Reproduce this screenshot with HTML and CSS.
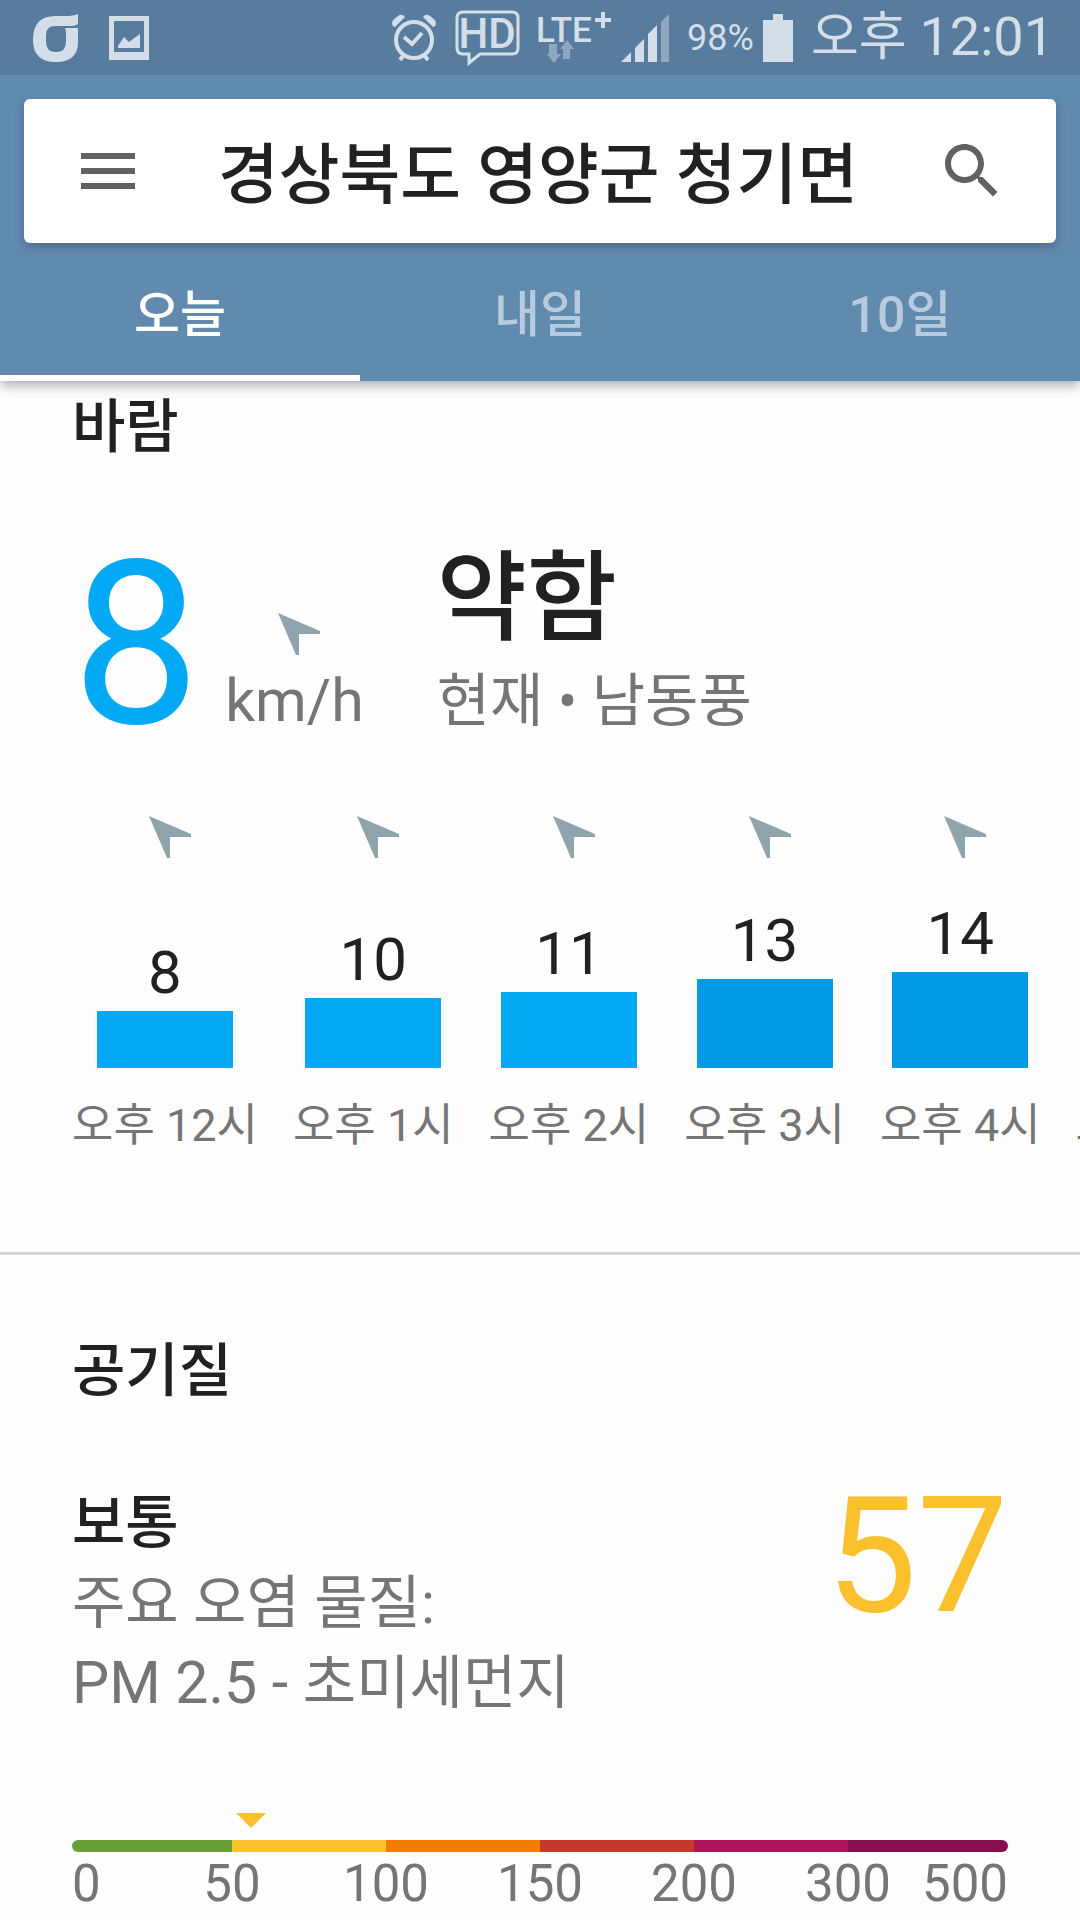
FILE: index.html
```html
<!DOCTYPE html>
<html lang="ko">
<head>
<meta charset="utf-8">
<meta name="viewport" content="width=device-width, initial-scale=1">
<title>날씨 - 경상북도 영양군 청기면</title>
<link rel="stylesheet" href="styles.css">
</head>
<body>
<svg class="symbols" aria-hidden="true">
  <symbol id="wind-arrow" viewBox="0 0 72 42"><path d="M20 0 L62 18 V21 H41 V42 H38 Z"/></symbol>
</svg>

<header class="header">
  <div class="status">
    <div class="status-side">
      <svg class="kt" viewBox="0 0 46 48" role="img" aria-label="통신사"><path d="M45 0V10Q42 12 36 12H22Q13 12 13 21V28Q13 38 23 38Q33 38 33 28V22Q33 16 32 14H45V28Q45 48 23 48Q0 48 0 26Q0 2 22 2H32Q40 2 45 0Z"/></svg>
      <svg class="photo" viewBox="0 0 40 44" role="img" aria-label="사진"><path fill-rule="evenodd" d="M0 0H40V44H0ZM5 5V36H35V5Z"/><path d="M9 32V30L15 21L20 26L31 18V32Z"/></svg>
    </div>
    <div class="status-side">
      <svg class="alarm" viewBox="0 0 44 48" role="img" aria-label="알람"><g fill="none" stroke="currentColor"><circle cx="22" cy="26" r="18" stroke-width="4"/><path d="M12 23L20 30L30 19" stroke-width="4"/><path d="M11 42L8 46M33 42L36 46" stroke-width="4"/></g><path d="M0 9Q0 6 6 2Q10 -1 13 3L3 13Q0 12 0 9ZM44 9Q44 6 38 2Q34 -1 31 3L41 13Q44 12 44 9Z"/></svg>
      <svg class="hd" viewBox="0 0 65 55" role="img" aria-label="HD"><path d="M8 2H57Q63 2 63 8V38Q63 44 57 44H25L14 53V44H8Q2 44 2 38V8Q2 2 8 2Z" fill="none" stroke="currentColor" stroke-width="3"/><text x="32" y="38" text-anchor="middle" class="hd-text">HD</text></svg>
      <svg class="lte" viewBox="0 0 77 52" role="img" aria-label="LTE+"><text x="0" y="30" class="lte-text">LTE</text><path d="M65 0H69V6H75V10H69V16H65V10H59V6H65Z"/><path class="dim" d="M13 32H21V42H25L18 51L11 42H13ZM27 47V37H24L31 28L38 37H34V47Z"/></svg>
      <svg class="signal" viewBox="0 0 48 48" role="img" aria-label="신호"><path d="M0 48L10 38V48ZM14 48V34L23 25V48ZM27 48V20L36 11V48Z"/><path class="dim" d="M40 48V8L48 0V48Z"/></svg>
      <span class="percent">98%</span>
      <svg class="battery" viewBox="0 0 30 48" role="img" aria-label="배터리"><path d="M10 0H20V6H30V48H0V6H10Z"/></svg>
      <time class="clock">오후 <span class="clock-digits">12:01</span></time>
    </div>
  </div>

  <form class="search">
    <button type="button" class="icon-button" aria-label="메뉴"><svg viewBox="0 0 24 24"><path d="M3 18h18v-2H3v2zm0-5h18v-2H3v2zm0-7v2h18V6H3z"/></svg></button>
    <input class="place" type="text" aria-label="위치" value="경상북도 영양군 청기면">
    <button type="submit" class="icon-button" aria-label="검색"><svg viewBox="0 0 24 24"><path d="M15.5 14h-.79l-.28-.27C15.41 12.59 16 11.11 16 9.5 16 5.91 13.09 3 9.5 3S3 5.91 3 9.5 5.91 16 9.5 16c1.61 0 3.09-.59 4.23-1.57l.27.28v.79l5 4.99L20.49 19l-4.99-5zm-6 0C7.01 14 5 11.99 5 9.5S7.01 5 9.5 5 14 7.01 14 9.5 11.99 14 9.5 14z"/></svg></button>
  </form>

  <nav class="tabs">
    <a class="tab active" href="#today">오늘</a>
    <a class="tab" href="#tomorrow">내일</a>
    <a class="tab" href="#ten-days">10일</a>
  </nav>
</header>

<main>
  <section class="wind">
    <h2 class="heading">바람</h2>
    <div class="now">
      <span class="speed">8</span>
      <div class="unit">
        <svg class="arrow"><use href="#wind-arrow"/></svg>
        <span class="latin">km/h</span>
      </div>
      <div class="summary">
        <strong class="strength">약함</strong>
        <span class="detail">현재 • 남동풍</span>
      </div>
    </div>
    <ul class="hours">
      <li class="hour"><svg class="arrow"><use href="#wind-arrow"/></svg><span class="value">8</span><span class="bar" style="height:57px"></span><span class="time">오후 12시</span></li>
      <li class="hour"><svg class="arrow"><use href="#wind-arrow"/></svg><span class="value">10</span><span class="bar" style="height:70px"></span><span class="time">오후 1시</span></li>
      <li class="hour"><svg class="arrow"><use href="#wind-arrow"/></svg><span class="value">11</span><span class="bar" style="height:76px"></span><span class="time">오후 2시</span></li>
      <li class="hour"><svg class="arrow"><use href="#wind-arrow"/></svg><span class="value">13</span><span class="bar strong" style="height:89px"></span><span class="time">오후 3시</span></li>
      <li class="hour"><svg class="arrow"><use href="#wind-arrow"/></svg><span class="value">14</span><span class="bar strong" style="height:96px"></span><span class="time">오후 4시</span></li>
      <li class="hour"><span class="time">오후 5시</span></li>
    </ul>
  </section>

  <section class="air">
    <h2 class="heading">공기질</h2>
    <div class="air-now">
      <div class="air-text">
        <h3 class="heading">보통</h3>
        <p class="detail">주요 오염 물질:<br><span class="latin">PM 2.5 - </span>초미세먼지</p>
      </div>
      <span class="index">57</span>
    </div>
    <div class="scale">
      <svg class="marker" viewBox="0 0 30 15" style="left:19.12%"><path d="M0 0H30L15 15Z"/></svg>
      <div class="track">
        <span class="good"></span><span class="moderate"></span><span class="sensitive"></span><span class="unhealthy"></span><span class="very"></span><span class="hazard"></span>
      </div>
      <div class="ticks">
        <span>0</span><span>50</span><span>100</span><span>150</span><span>200</span><span>300</span><span>500</span>
      </div>
    </div>
  </section>
</main>
</body>
</html>
```
FILE: styles.css
```css
* { box-sizing: border-box; }

body {
  margin: 0;
  min-height: 100vh;
  background: #fefefe;
  color: #212121;
  font-family: Roboto, "Noto Sans CJK KR", sans-serif;
  font-size: 58px;
  line-height: 80px;
  overflow-x: hidden;
}

h2, h3, p, ul { margin: 0; padding: 0; }
svg { display: block; fill: currentColor; flex: none; overflow: visible; }
.symbols { display: none; }

/* Header */
.header {
  position: relative;
  background: #608aae;
  box-shadow: 0 4px 12px rgba(0, 0, 0, 0.35);
}

.status {
  display: flex;
  justify-content: space-between;
  height: 75px;
  padding: 0 26px 0 33px;
  background: #587c9e;
  color: #d3dee8;
  line-height: 76px;
}
.status-side { display: flex; align-items: center; white-space: nowrap; }
.kt { width: 46px; height: 48px; margin-right: 30px; }
.photo { width: 40px; height: 44px; }
.alarm { width: 44px; height: 48px; margin-right: 19px; }
.hd { width: 65px; height: 55px; margin-right: 16px; }
.hd-text { font-size: 42px; font-weight: 500; }
.lte { width: 77px; height: 52px; margin-right: 8px; }
.lte-text { font-size: 35px; font-weight: 500; }
.dim { opacity: 0.45; }
.signal { width: 48px; height: 48px; margin-right: 18px; }
.percent { font-size: 36px; margin-right: 9px; }
.battery { width: 30px; height: 48px; margin-right: 18px; }
.clock { font-size: 52px; }
.clock-digits { font-size: 54px; }

.search {
  display: flex;
  align-items: center;
  height: 144px;
  margin: 24px 24px 0;
  padding: 0 48px;
  border-radius: 6px;
  background: #fff;
  box-shadow: 0 4px 8px rgba(60, 70, 110, 0.45);
}
.icon-button {
  flex: none;
  width: 72px;
  height: 72px;
  padding: 0;
  border: 0;
  background: none;
  color: #616161;
}
.place {
  flex: 1;
  min-width: 0;
  height: 96px;
  padding: 0 4px 4px 0;
  border: 0;
  background: none;
  color: #212121;
  font: 500 66px Roboto, "Noto Sans CJK KR", sans-serif;
  text-align: center;
}

.tabs { display: grid; grid-template-columns: repeat(3, 1fr); }
.tab {
  height: 138px;
  border-bottom: 6px solid transparent;
  color: #b8cadd;
  font-size: 50px;
  font-weight: 500;
  line-height: 144px;
  text-align: center;
  text-decoration: none;
}
.tab.active { color: #fff; border-color: #fff; }

/* Shared text */
.heading { font-size: 58px; font-weight: 500; line-height: 80px; }
.detail { color: #757575; }
.latin { color: #757575; font-size: 59px; }
.arrow { width: 72px; height: 42px; color: #90a4ae; }

/* Wind */
.wind { padding: 6px 0 94px; border-bottom: 3px solid #d5d5d5; }
.wind .heading { padding: 0 72px; }
.now { display: flex; align-items: flex-end; margin-top: 76px; padding: 0 72px; }
.speed { color: #03a9f4; font-size: 228px; line-height: 192px; }
.unit { display: flex; flex-direction: column; align-items: center; gap: 6px; margin-left: 25px; }
.summary { display: flex; flex-direction: column; gap: 6px; margin-left: 73px; }
.strength { font-size: 98px; font-weight: 500; line-height: 112px; }

.hours {
  display: flex;
  gap: 35px;
  margin-top: 75px;
  padding-left: 72px;
  overflow: hidden;
  list-style: none;
}
.hour { display: flex; flex: none; flex-direction: column; align-items: center; }
.value { margin-top: auto; padding-top: 40px; font-size: 60px; line-height: 72px; }
.bar { width: 136px; margin: 2px 0 26px; background: #03a9f4; }
.bar.strong { background: #039be5; }
.time { color: #757575; font-size: 45px; line-height: 64px; margin-top: auto; }
.bar + .time { margin-top: 0; }

/* Air quality */
.air { padding: 76px 72px 4px; }
.air-now { display: flex; justify-content: space-between; align-items: flex-start; margin-top: 72px; }
.index { color: #fbc02d; font-size: 162px; line-height: 146px; }

.scale { position: relative; margin-top: 90px; padding-top: 27px; }
.marker { position: absolute; top: 0; width: 30px; height: 15px; margin-left: -15px; color: #fbc02d; }
.track {
  display: grid;
  grid-template-columns: 160fr repeat(4, 154fr) 160fr;
  height: 12px;
  border-radius: 6px;
  overflow: hidden;
}
.good { background: #689f38; }
.moderate { background: #fbc02d; }
.sensitive { background: #f57c00; }
.unhealthy { background: #c53929; }
.very { background: #ad1457; }
.hazard { background: #880e4f; }
.ticks {
  display: grid;
  grid-template-columns: minmax(0, 83fr) repeat(5, minmax(0, 154fr)) minmax(0, 83fr);
  justify-items: center;
  color: #757575;
  font-size: 51px;
  line-height: 64px;
}
.ticks span:first-child { justify-self: start; }
.ticks span:last-child { justify-self: end; }
```
